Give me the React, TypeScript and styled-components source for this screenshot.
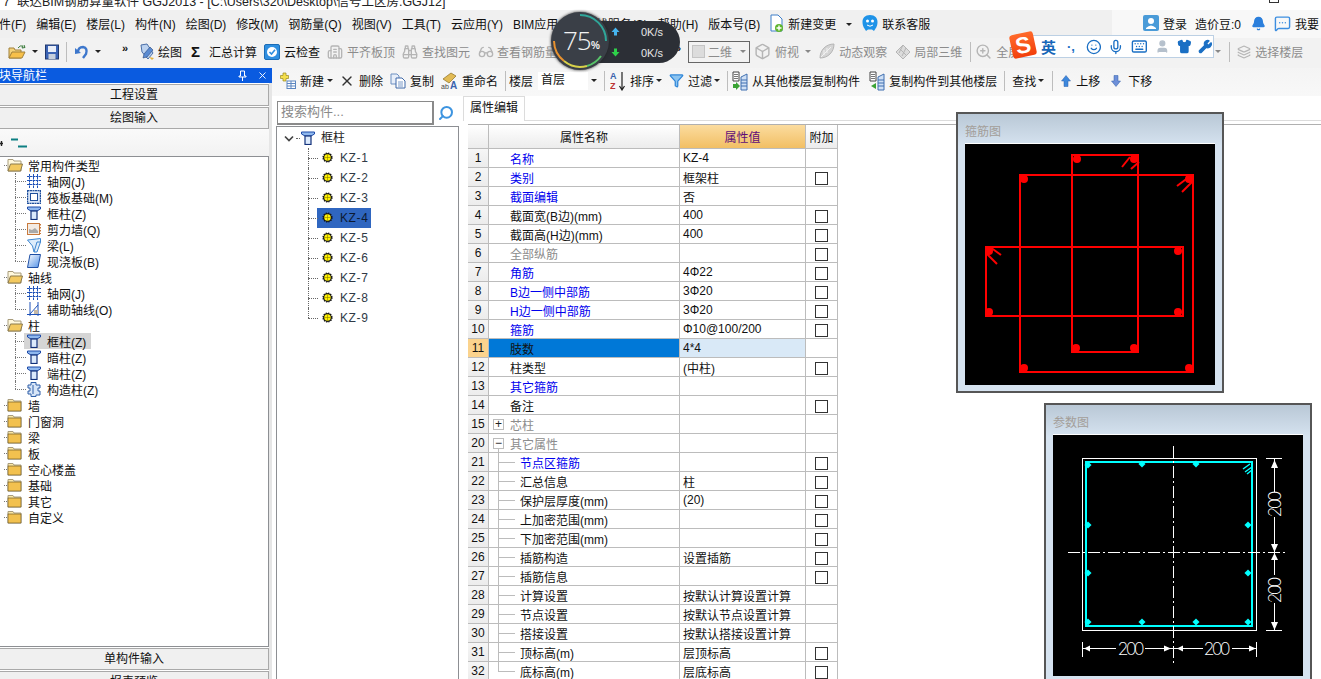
import React from "react";
import styled, { createGlobalStyle } from "styled-components";
import {
  Binoculars, Box, Glasses, Keyboard, Layers, MessageSquareMore, Mic, Smile,
  Shirt, Wrench, X, ZoomIn, Search, Funnel, Boxes, Building2, Bell, User,
} from "lucide-react";

const GlobalStyle = createGlobalStyle`
  html, body {
    margin: 0;
    padding: 0;
    background: #fff;
    overflow: hidden;
  }
  body {
    font-family: "Liberation Sans", "Noto Sans CJK SC", sans-serif;
    font-size: 12px;
    color: #111;
  }
`;

const Page = styled.div`
  position: relative;
  width: 1321px;
  height: 679px;
  overflow: hidden;
  background: #fff;
`;

const TitleBar = styled.div`
  height: 10px;
  display: flex;
  overflow: hidden;
  background: #fff;
  font-size: 12.5px;
  line-height: 12px;
  color: #222;
`;

const TitleText = styled.span`
  margin: -4px 0 0 3px;
  white-space: pre;
`;

const WinButton = styled.span`
  width: 8px;
  height: 2px;
  margin: 0 42px 0 auto;
  border: 1px solid #333;
  border-top: 0;
`;

const MenuBar = styled.div`
  height: 28px;
  padding-left: 0;
  display: flex;
  align-items: center;
  gap: 10px;
  background: #f0f0f0;
  white-space: nowrap;
`;

const MenuItem = styled.span<{ $ml?: number }>`
  margin: -2px 0 0 ${p => p.$ml || 0}px;
  display: flex;
  align-items: center;
  gap: 4px;
`;

const LoginZone = styled.div`
  margin-left: auto;
  width: 209px;
  height: 100%;
  box-sizing: border-box;
  padding: 0 0 2px 31px;
  display: flex;
  align-items: center;
  gap: 4px;
  background: #f8f8f8;
`;

const LoginText = styled.span<{ $ml?: number }>`
  margin-left: ${p => p.$ml || 0}px;
  display: flex;
`;

const Toolbar = styled.div<{ $tall?: number; $pad?: number; $bg?: string }>`
  height: ${p => p.$tall}px;
  box-sizing: border-box;
  padding: 0 0 3px ${p => p.$pad || 0}px;
  display: flex;
  align-items: center;
  background: ${p => p.$bg};
  white-space: nowrap;
`;

const Tool = styled.span<{ $ml?: number; $off?: boolean; $gap?: number }>`
  margin-left: ${p => p.$ml || 0}px;
  display: flex;
  flex: none;
  align-items: center;
  gap: ${p => (p.$gap === undefined ? 4 : p.$gap)}px;
  color: ${p => (p.$off ? "#8c8c8c" : "#111")};
`;

const Caret = styled.span<{ $ml?: number; $off?: boolean }>`
  margin-left: ${p => p.$ml || 0}px;
  flex: none;
  width: 0;
  height: 0;
  border: 3px solid transparent;
  border-top: 3px solid ${p => (p.$off ? "#888" : "#222")};
  border-bottom: 0;
`;

const Sep = styled.span<{ $ml?: number }>`
  margin-left: ${p => p.$ml || 0}px;
  flex: none;
  width: 1px;
  height: 20px;
  background: #bdbdbd;
`;

const Chevrons = styled.span<{ $ml?: number }>`
  margin: -8px 0 0 ${p => p.$ml || 0}px;
  flex: none;
  width: 10px;
  font-size: 11px;
  font-weight: 700;
  line-height: 12px;
`;

const SigmaMark = styled.b`
  width: 11px;
  font-size: 15px;
  line-height: 16px;
`;

const ViewSelect = styled.span`
  margin-left: 3px;
  flex: none;
  width: 62px;
  height: 22px;
  box-sizing: border-box;
  padding-left: 3px;
  display: flex;
  align-items: center;
  gap: 3px;
  border: 1px solid #666;
  color: #8c8c8c;
`;

const ViewSwatch = styled.span`
  width: 13px;
  height: 13px;
  background: #dcdcdc;
  border: 1px solid #c4c4c4;
  box-sizing: border-box;
`;

const FloorSelect = styled.span`
  margin-left: 5px;
  flex: none;
  width: 50px;
  height: 18px;
  line-height: 16px;
  padding-left: 3px;
  box-sizing: border-box;
  background: #fff;
`;

const Body = styled.div`
  display: flex;
  height: 611px;
`;

const LeftPane = styled.div`
  flex: none;
  width: 272px;
  height: 100%;
  display: flex;
  flex-direction: column;
  background: linear-gradient(to right, #fff 269px, #e6e6e6 269px);
`;

const PaneHeader = styled.div`
  flex: none;
  height: 15px;
  display: flex;
  align-items: center;
  background: #0a5be0;
  color: #fff;
  line-height: 16px;
`;

const PaneTitle = styled.span`
  margin-left: -1px;
`;

const PaneControl = styled.span<{ $ml?: number }>`
  margin-left: ${p => p.$ml}px;
  display: flex;
  color: #fff;
`;

const NavButton = styled.div`
  flex: none;
  width: 269px;
  height: 22px;
  margin-top: 1px;
  box-sizing: border-box;
  border: 1px solid #a9a9a9;
  border-left: 0;
  background: #f0f0f0;
  text-align: center;
  line-height: 21px;
  font-size: 12px;
`;

const MiniBar = styled.div`
  flex: none;
  width: 269px;
  height: 27px;
  background: linear-gradient(#fafafa, #f2f2f2);
  display: flex;
  align-items: center;
`;

const NavTree = styled.div`
  flex: none;
  width: 269px;
  height: 491px;
  box-sizing: border-box;
  border: 1px solid #8d8f93;
  border-left: 0;
  background: #fff;
`;

const NavRow = styled.div<{ $line?: "mid" | "end" }>`
  position: relative;
  height: 16px;
  display: flex;
  align-items: center;
  padding-left: ${p => (p.$line ? 24 : 7)}px;
  gap: 5px;
  white-space: nowrap;
  &::before {
    content: "";
    position: absolute;
    left: ${p => (p.$line ? 15 : 4)}px;
    top: ${p => (p.$line ? 0 : 8)}px;
    height: ${p => (p.$line === "end" ? 8 : p.$line ? 16 : 0)}px;
    border-left: 1px dotted #777;
  }
  &::after {
    content: "";
    position: absolute;
    left: ${p => (p.$line ? 15 : 4)}px;
    top: 8px;
    width: ${p => (p.$line ? 11 : 3)}px;
    border-top: 1px dotted #777;
  }
`;

const NavEntry = styled.span<{ $on?: boolean }>`
  position: relative;
  z-index: 1;
  height: 16px;
  display: flex;
  align-items: center;
  gap: 6px;
  padding: 0 5px 0 3px;
  background: ${p => (p.$on ? "#d5d5d5" : "transparent")};
`;

const MiddlePane = styled.div`
  flex: none;
  width: 183px;
  margin-left: 4px;
  height: 100%;
  display: flex;
  flex-direction: column;
`;

const ContentRow = styled.div`
  display: flex;
  height: 583px;
`;

const MainColumn = styled.div`
  flex: 1;
  min-width: 0;
`;

const SearchRow = styled.div`
  flex: none;
  height: 30px;
  display: flex;
  align-items: center;
  padding-top: 4px;
  box-sizing: border-box;
`;

const SearchInput = styled.div`
  margin-left: 1px;
  width: 157px;
  height: 24px;
  box-sizing: border-box;
  padding-left: 3px;
  border: 1px solid #8a8a8a;
  border-right-width: 2px;
  border-bottom-width: 2px;
  color: #8a8a8a;
  font-size: 13px;
  line-height: 20px;
`;

const SearchButton = styled.span`
  margin-left: 4px;
  display: flex;
  color: #3d94e0;
  transform: scaleX(-1);
`;

const MemberTree = styled.div`
  flex: 1;
  padding-top: 1px;
  border: 1px solid #8d8f93;
  border-bottom: 0;
`;

const MemberRoot = styled.div`
  position: relative;
  height: 20px;
  display: flex;
  align-items: center;
  padding-left: 7px;
  &::after {
    content: "";
    position: absolute;
    left: 19px;
    top: 10px;
    width: 4px;
    border-top: 1px dotted #666;
  }
`;

const RootIcon = styled.span`
  margin-left: 7px;
  display: flex;
`;

const MemberRootLabel = styled.span`
  margin: -3px 0 0 6px;
  color: #222;
`;

const MemberRow = styled.div<{ $last?: boolean }>`
  position: relative;
  height: 20px;
  display: flex;
  align-items: center;
  &::before {
    content: "";
    position: absolute;
    left: 31px;
    top: 0;
    height: ${p => (p.$last ? 10 : 20)}px;
    border-left: 1px dotted #666;
  }
  &::after {
    content: "";
    position: absolute;
    left: 31px;
    top: 10px;
    width: 10px;
    border-top: 1px dotted #666;
  }
`;

const MemberEntry = styled.span<{ $on?: boolean }>`
  margin-left: 40px;
  width: 54px;
  height: 20px;
  padding: 0 0 1px 5px;
  display: flex;
  align-items: center;
  gap: 7px;
  box-sizing: border-box;
  background: ${p => (p.$on ? "#2f66c0" : "transparent")};
  color: ${p => (p.$on ? "#0c1a33" : "#303a46")};
  letter-spacing: 0.6px;
`;

const RightPane = styled.div`
  flex: 1;
  margin-left: 4px;
  min-width: 0;
`;

const TabStrip = styled.div`
  height: 24px;
  border-bottom: 1px solid #dcdcdc;
  display: flex;
`;

const Tab = styled.div`
  width: 62px;
  height: 25px;
  box-sizing: border-box;
  border: 1px solid #dcdcdc;
  border-bottom: 0;
  background: #fff;
  text-align: center;
  line-height: 23px;
`;

const TableTop = styled.div`
  height: 3px;
  border-bottom: 1px solid #b0b0b0;
  margin-left: 5px;
`;

const PropTable = styled.table`
  margin-left: 5px;
  width: 370px;
  table-layout: fixed;
  border-collapse: separate;
  border-spacing: 0;
  font-size: 12px;
  & th, & td {
    padding: 0;
    box-sizing: border-box;
    border-right: 1px solid #bcbcbc;
    border-bottom: 1px solid #bcbcbc;
    font-weight: 400;
    white-space: nowrap;
    overflow: hidden;
  }
`;

const HeadCell = styled.th<{ $hot?: boolean }>`
  height: 24px;
  background: ${p =>
    p.$hot ? "linear-gradient(#fbdc9f, #f2bf64)" : "linear-gradient(#ffffff, #ececec)"};
  color: ${p => (p.$hot ? "#5f0d78" : "#111")};
`;

const NumCell = styled.td<{ $on?: boolean }>`
  height: 19px;
  text-align: center;
  background: ${p => (p.$on ? "#fbd38d" : "linear-gradient(#f6f6f6, #ececec)")};
`;

const NameCell = styled.td<{
  $tone: string;
  $on?: boolean;
  $tree?: "group" | "open" | "mid" | "end";
}>`
  position: relative;
  height: 19px;
  padding-left: ${p =>
    p.$tree === "group" || p.$tree === "open"
      ? 4
      : p.$tree
      ? 31
      : 21}px !important;
  background: ${p => (p.$on ? "#0078d7" : "#fff")};
  color: ${p => (p.$tone === "blue" ? "#0000ee" : p.$tone === "gray" ? "#8c8c8c" : "#111")};
  &::before {
    content: "";
    position: absolute;
    left: 9px;
    top: ${p => (p.$tree === "open" ? 14 : 0)}px;
    height: ${p => (p.$tree === "open" ? 5 : p.$tree === "end" ? 9 : p.$tree === "mid" ? 19 : 0)}px;
    border-left: 1px solid #bcbcbc;
  }
  &::after {
    content: "";
    position: absolute;
    left: 9px;
    top: 9px;
    width: ${p => (p.$tree === "mid" || p.$tree === "end" ? 17 : 0)}px;
    border-top: 1px solid #bcbcbc;
    display: ${p => (p.$tree === "mid" || p.$tree === "end" ? "block" : "none")};
  }
`;

const GroupInner = styled.span`
  display: flex;
  align-items: center;
  gap: 6px;
`;

const Expander = styled.span`
  width: 11px;
  height: 11px;
  box-sizing: border-box;
  border: 1px solid #bcbcbc;
  color: #222;
  font-size: 12px;
  line-height: 8px;
  text-align: center;
`;

const ValueCell = styled.td<{ $on?: boolean }>`
  height: 19px;
  padding-left: 3px !important;
  background: ${p => (p.$on ? "#d9e9f7" : "#fff")};
`;

const ExtraCell = styled.td`
  height: 19px;
  background: #fff;
  text-align: center;
`;

const Check = styled.span`
  display: inline-block;
  width: 13px;
  height: 13px;
  margin-top: 2px;
  box-sizing: border-box;
  border: 1px solid #333;
  vertical-align: top;
`;

const FloatWindow = styled.div<{ $left: number; $top: number; $height: number }>`
  position: absolute;
  left: ${p => p.$left}px;
  top: ${p => p.$top}px;
  width: 268px;
  height: ${p => p.$height}px;
  box-sizing: border-box;
  padding: 0 7px;
  border: 2px solid #565656;
  background: linear-gradient(#b9c8d6, #d6e3f0 32px);
`;

const FloatTitle = styled.div`
  height: 30px;
  line-height: 36px;
  color: #a39e99;
`;

const DrawingCanvas = styled.svg`
  display: block;
  width: 250px;
  height: 241px;
  background: #000;
  border-top: 1px solid #fff;
  margin-top: -1px;
  font-family: "Inter", "Liberation Sans", sans-serif;
`;

const SpeedWidget = styled.div`
  position: absolute;
  left: 551px;
  top: 12px;
  width: 130px;
  height: 58px;
  display: flex;
  align-items: center;
`;

const SpeedPill = styled.div`
  position: absolute;
  left: 48px;
  top: 9px;
  width: 81px;
  height: 42px;
  border-radius: 0 21px 21px 0;
  background: #2c2f36;
  color: #fff;
  font-size: 10px;
`;

const SpeedLine = styled.div`
  height: 21px;
  display: flex;
  align-items: center;
  padding-left: 12px;
`;

const SpeedValue = styled.span`
  margin-left: 21px;
  color: #e6e6e6;
  font-size: 11px;
`;

const SpeedDial = styled.div`
  position: relative;
  width: 58px;
  height: 58px;
  border-radius: 50%;
  background: #3a3f47;
  box-shadow: 0 0 3px #222;
  color: #f2f2f2;
`;

const DialRing = styled.svg`
  position: absolute;
  inset: 0;
`;

const DialText = styled.span`
  position: absolute;
  left: 12px;
  top: 10px;
  font-size: 26px;
  line-height: 36px;
  font-weight: 300;
  font-family: "Open Sans", "Liberation Sans", sans-serif;
  letter-spacing: -1px;
`;

const DialPercent = styled.span`
  position: absolute;
  left: 40px;
  top: 28px;
  font-size: 10px;
  line-height: 12px;
  font-weight: 700;
`;

const ImeBar = styled.div`
  position: absolute;
  left: 1018px;
  top: 35px;
  width: 196px;
  height: 23px;
  box-sizing: border-box;
  display: flex;
  align-items: center;
  padding-left: 22px;
  gap: 7px;
  background: #fff;
  border: 1px solid #bcd0e4;
  color: #1a6fc4;
`;

const ImeLogo = styled.span`
  position: absolute;
  left: 1011px;
  top: 33px;
  width: 24px;
  height: 24px;
  transform: rotate(-12deg);
  border-radius: 3px;
  background: linear-gradient(#ff6a2a, #f23f0c);
  color: #fff;
  font-size: 23px;
  line-height: 24px;
  font-weight: 700;
  text-align: center;
`;

const ImeLang = styled.b`
  font-size: 15px;
  color: #1766b8;
`;

const ImeMoon = styled.span`
  width: 16px;
  font-size: 13px;
  font-weight: 700;
  line-height: 12px;
  text-align: center;
`;

/* ---------- drawn icons ---------- */

const FolderIcon = ({ open }: { open?: boolean }) => (
  <svg width="16" height="14" viewBox="0 0 16 14">
    <path d="M1 3 V1.5 H6 L7 3 H14 V13 H1 Z" fill={open ? "#fff8dc" : "#fbe7a4"} stroke="#a89c7c" />
    {open ? (
      <path d="M3.5 6 H15.5 L13.5 13 H1 Z" fill="#f3c95f" stroke="#8a7a4f" />
    ) : (
      <rect x="1" y="4" width="13" height="9" fill="#f2c14f" stroke="#5a4a1f" strokeWidth="0.6" />
    )}
  </svg>
);

const OpenFileIcon = () => (
  <svg width="18" height="16" viewBox="0 0 18 16" style={{ flex: "none" }}>
    <path d="M1 4 H6 L7 6 H13 V14 H1 Z" fill="#f4d27a" stroke="#a0803a" />
    <path d="M4 8 H17 L14 14 H1 Z" fill="#f7c04a" stroke="#a0803a" />
    <path d="M10 4 Q12 1 15 2 L14 4 L17 3.500 L16 1" fill="none" stroke="#3a7a3a" strokeWidth="1" />
  </svg>
);

const SaveIcon = () => (
  <svg width="14" height="16" viewBox="0 0 14 16" style={{ flex: "none" }}>
    <rect x="0.5" y="1" width="13" height="14" fill="#3b63b4" stroke="#20386e" />
    <rect x="3" y="2" width="8" height="6" fill="#e9eef8" />
    <rect x="3.500" y="10" width="7" height="5" fill="#c6cfdd" />
  </svg>
);

const UndoIcon = () => (
  <svg width="14" height="16" viewBox="0 0 14 16" style={{ flex: "none" }}>
    <path d="M3 8 Q3 3 8 3 Q13 4 11 10 L8 14" fill="none" stroke="#3d77cc" strokeWidth="2.4" />
    <path d="M0 4 L6 9 L0 10 Z" fill="#3d77cc" />
  </svg>
);

const PencilIcon = () => (
  <svg width="16" height="18" viewBox="0 0 16 18">
    <path d="M2 2 L8 1 L14 10 L9 16 L3 9 Z" fill="#bcd2ef" stroke="#4b6fa8" />
    <path d="M5 11 L11 4 L14 7 L8 14 L4 15 Z" fill="#5b8bd1" stroke="#27467d" strokeWidth="0.6" />
    <path d="M10 14 L15 15 L13 17 Z" fill="#e3b23c" />
  </svg>
);

const CloudCheckIcon = () => (
  <svg width="16" height="18" viewBox="0 0 16 18">
    <rect x="0.5" y="1.500" width="15" height="15" rx="1.500" fill="#2f8fe0" stroke="#1b6cb5" />
    <circle cx="8" cy="9" r="5" fill="#fff" />
    <path d="M5.500 9 L7.500 11 L11 6.800" fill="none" stroke="#2f8fe0" strokeWidth="1.600" />
  </svg>
);

const LeafIcon = () => (
  <svg width="17" height="17" viewBox="0 0 17 17">
    <path d="M2 15 C2 7 8 1 16 1 C16 9 10 15 2 15 Z" fill="#d4d4d4" stroke="#b5b5b5" />
    <path d="M3 14 L13 4 M6 7 V12 M9 5 V10" stroke="#f2f2f2" />
  </svg>
);

const DiamondBoxIcon = () => (
  <svg width="16" height="16" viewBox="0 0 16 16">
    <path d="M8 1 L15 8 L8 15 L1 8 Z" fill="#dcdcdc" stroke="#b5b5b5" />
    <path d="M4.500 4.500 L11.500 11.500 M8 1 L4 9 M11 4 L7 12" stroke="#b5b5b5" fill="none" />
  </svg>
);

const DocPlusIcon = () => (
  <svg width="14" height="19" viewBox="0 0 14 19">
    <path d="M1 1 H8 L12 5 V17 H1 Z" fill="#fff" stroke="#3f7fc9" />
    <circle cx="9" cy="14" r="4" fill="#5fb52e" />
    <path d="M9 11.500 V16.500 M6.500 14 H11.500" stroke="#fff" strokeWidth="1.400" />
  </svg>
);

const MascotIcon = () => (
  <svg width="16" height="18" viewBox="0 0 16 18">
    <path d="M8 1 C13 1 15.500 4 15.500 8 C15.500 13 13 15 12 17 L10 15.500 H6 L4 17 C3 15 0.500 13 0.500 8 C0.500 4 3 1 8 1 Z" fill="#1f93e8" />
    <circle cx="5.500" cy="7" r="1.500" fill="#fff" />
    <circle cx="10.500" cy="7" r="1.500" fill="#fff" />
    <path d="M5 11 Q8 13.500 11 11" stroke="#fff" fill="none" />
  </svg>
);

const NewPartIcon = () => (
  <svg width="16" height="18" viewBox="0 0 16 18">
    <path d="M3 1 H6 V3.500 H8.500 V6.500 H6 V9 H3 V6.500 H0.500 V3.500 H3 Z" fill="#f5df4d" stroke="#9a8a20" strokeWidth="0.7" />
    <rect x="7" y="9" width="8.500" height="7.500" fill="#fff" stroke="#5c86c0" />
    <path d="M7 11.500 H15.500 M7 14 H15.500 M11 9 V16.500" stroke="#5c86c0" />
  </svg>
);

const CopyIcon = () => (
  <svg width="16" height="16" viewBox="0 0 16 16">
    <path d="M1 1 H7 L9 3 V11 H1 Z" fill="#e7eef9" stroke="#6d8fc0" />
    <path d="M6 5 H12 L15 8 V15 H6 Z" fill="#fff" stroke="#3e68a8" />
    <path d="M8 9 H13 M8 11 H13 M8 13 H13" stroke="#7b9ac8" />
  </svg>
);

const RenameIcon = () => (
  <svg width="17" height="18" viewBox="0 0 17 18">
    <path d="M2 7 L10 1 L15 4 L8 11 Z" fill="#e2bb55" stroke="#8b6f22" strokeWidth="0.7" />
    <text x="0" y="17" fontSize="7" fill="#444">ab</text>
    <text x="9" y="17" fontSize="10" fontWeight="700" fill="#3a63ad">A</text>
  </svg>
);

const SortIcon = () => (
  <svg width="16" height="20" viewBox="0 0 16 20">
    <text x="0" y="8" fontSize="9" fontWeight="700" fill="#3a63ad">A</text>
    <text x="0" y="18" fontSize="9" fontWeight="700" fill="#b33">Z</text>
    <path d="M12 1 V18 M9.500 15 L12 19 L14.500 15" fill="none" stroke="#222" strokeWidth="1.200" />
  </svg>
);

const FloorCopyIcon = ({ back }: { back?: boolean }) => (
  <svg width="16" height="20" viewBox="0 0 16 20">
    <path d="M1 1 H7 V10 H1 Z" fill="#fff" stroke="#444" />
    <path d="M2 3.500 H6 M2 5.500 H6 M2 7.500 H6" stroke="#777" />
    <path d="M9 6 L15 3 V19 H9 Z" fill="#cfe0f5" stroke="#3f6fb0" />
    <path d="M9 9 H15 M9 12 H15 M9 15 H15" stroke="#3f6fb0" />
    <path d={back ? "M7 12 L2 15 L7 18 Z" : "M1 13 H4 V11 L8 15 L4 19 V17 H1 Z"} fill="#3aa334" />
  </svg>
);

const MoveIcon = ({ down }: { down?: boolean }) => (
  <svg width="10" height="12" viewBox="0 0 10 12">
    <path
      d={down ? "M3 0.500 H7 V6 H9.500 L5 11.500 L0.500 6 H3 Z" : "M3 11.500 H7 V6 H9.500 L5 0.500 L0.500 6 H3 Z"}
      fill={down ? "#6d8fd8" : "#3d88dd"}
      stroke="#2e5fa8"
      strokeWidth="0.5"
    />
  </svg>
);

const ColumnIcon = () => (
  <svg width="14" height="14" viewBox="0 0 14 14" style={{ flex: "none" }}>
    <path d="M0.500 1 H13.500 V3 L10 5 H4 L0.500 3 Z" fill="#8fb8ee" stroke="#1d4aa8" />
    <rect x="4" y="5" width="6" height="8.500" fill="#dceafc" stroke="#12307a" strokeWidth="1.200" />
  </svg>
);

const GridIcon = () => (
  <svg width="14" height="14" viewBox="0 0 14 14" style={{ flex: "none" }}>
    <path d="M2.500 0 V14 M6.500 0 V14 M10.500 0 V14 M0 2.500 H14 M0 6.500 H14 M0 10.500 H14" stroke="#1f52b8" strokeDasharray="2.500 0.500" />
  </svg>
);

const RaftIcon = () => (
  <svg width="14" height="14" viewBox="0 0 14 14" style={{ flex: "none" }}>
    <rect x="0.500" y="0.500" width="13" height="13" fill="#dbe7f8" stroke="#1f4f9c" strokeWidth="1.400" strokeDasharray="2 0.5" />
    <rect x="3.500" y="3.500" width="7" height="7" fill="#fff" stroke="#1f4f9c" />
  </svg>
);

const WallIcon = () => (
  <svg width="14" height="14" viewBox="0 0 14 14" style={{ flex: "none" }}>
    <rect x="0.500" y="1.500" width="12" height="11" fill="#f3ebe3" stroke="#c97a3d" />
    <path d="M2 11 H11 V9 L8 6 L5 8 L2 7 Z" fill="#a9a9a9" />
    <path d="M13.500 2 V12" stroke="#c97a3d" strokeDasharray="1.500 1.500" />
  </svg>
);

const BeamIcon = () => (
  <svg width="14" height="15" viewBox="0 0 14 15" style={{ flex: "none" }}>
    <path d="M0.500 2 L13.500 0.500 V4 L10 14 H7 L5.500 8 Z" fill="#dcecfb" stroke="#3f86d0" />
    <path d="M7 14 L10 4 H13.500" fill="none" stroke="#3f86d0" />
  </svg>
);

const SlabIcon = () => (
  <svg width="14" height="14" viewBox="0 0 14 14" style={{ flex: "none" }}>
    <path d="M3 0.500 H13.500 L11 13.500 H0.500 Z" fill="url(#slabFill)" stroke="#1f4fa5" />
    <defs>
      <linearGradient id="slabFill" x1="0" y1="0" x2="1" y2="1">
        <stop offset="0" stopColor="#ffffff" />
        <stop offset="1" stopColor="#4f8fe6" />
      </linearGradient>
    </defs>
  </svg>
);

const AuxAxisIcon = () => (
  <svg width="14" height="14" viewBox="0 0 14 14" style={{ flex: "none" }}>
    <path d="M3 0 V14 M11 0 V14 M0 12.500 H14 M3 12 L11 3" stroke="#1f52b8" />
    <rect x="7" y="8" width="4" height="4" fill="#c7b9a5" />
  </svg>
);

const PuzzleIcon = () => (
  <svg width="14" height="15" viewBox="0 0 14 15" style={{ flex: "none" }}>
    <path d="M4 0.500 H9 V3 H13 V6 H11 V9 H13 V13 H9 V14.500 H4 V12 H1 V9 H3 V6 H1 V3 H4 Z" fill="#d7e5f7" stroke="#2f5fa8" />
    <path d="M6 3 V12" stroke="#2f5fa8" />
  </svg>
);

const GearDot = () => (
  <svg width="11" height="11" viewBox="0 0 11 11" style={{ flex: "none", position: "relative", zIndex: 1 }}>
    <circle cx="5.500" cy="5.500" r="4.400" fill="#222" stroke="#111" strokeDasharray="1.300 1" strokeWidth="1.400" />
    <circle cx="5.500" cy="5.500" r="3.200" fill="#fff200" />
    <path d="M5.500 2.500 V8.500 M2.500 5.500 H8.500" stroke="#7a6a00" strokeWidth="0.500" />
  </svg>
);

const ChevronDown = () => (
  <svg width="10" height="7" viewBox="0 0 10 7" style={{ flex: "none" }}>
    <path d="M1 1.500 L5 5.500 L9 1.500" fill="none" stroke="#444" strokeWidth="1.700" />
  </svg>
);

const PinIcon = () => (
  <svg width="9" height="11" viewBox="0 0 9 11">
    <path d="M2.500 1 H6.500 V6 H8 V7 H1 V6 H2.500 Z M4.500 7 V11" fill="none" stroke="#fff" />
  </svg>
);

const LoginBadge = () => (
  <svg width="16" height="18" viewBox="0 0 16 18" style={{ flex: "none" }}>
    <rect x="0" y="1" width="16" height="16" rx="2" fill="#4a9bd8" />
    <circle cx="8" cy="7" r="3" fill="#fff" />
    <path d="M3 14 Q8 9 13 14 V15 H3 Z" fill="#fff" />
  </svg>
);

const TreeCollapseMarks = () => (
  <svg width="30" height="14" viewBox="0 0 30 14">
    <path d="M0 7.500 H3 M1.500 5 V10" stroke="#222" strokeWidth="1.400" />
    <path d="M11 3.500 H18" stroke="#0d7f82" strokeWidth="2" />
    <path d="M18 10.500 H27" stroke="#0d7f82" strokeWidth="2" />
  </svg>
);

const SpeedArrow = ({ down }: { down?: boolean }) => (
  <svg width="9" height="9" viewBox="0 0 9 9">
    <path
      d={down ? "M3 0.500 H6 V4 H8.500 L4.500 8.500 L0.500 4 H3 Z" : "M3 8.500 H6 V5 H8.500 L4.500 0.500 L0.500 5 H3 Z"}
      fill={down ? "#2ed14a" : "#46b4ee"}
    />
  </svg>
);

/* ---------- rebar drawings ---------- */

const StirrupDrawing = () => {
  const rects = [
    [55, 31, 173, 197],
    [107, 11, 66, 197],
    [21, 103, 197, 69],
  ];
  const dots = [
    [112, 15], [169, 15], [111, 204], [169, 204],
    [59, 35], [224, 35], [59, 224], [224, 224],
    [24, 107], [213, 107], [24, 168], [213, 168],
  ];
  const hooks = [
    [165, 13, 157, 23], [174, 18, 166, 25],
    [224, 33, 212, 42], [228, 37, 217, 48],
    [25, 103, 36, 111], [21, 109, 32, 120],
  ];
  return (
    <DrawingCanvas viewBox="0 0 250 241">
      {rects.map(([x, y, w, h], i) => (
        <rect key={i} x={x} y={y} width={w} height={h} fill="none" stroke="#ff0000" strokeWidth="2" />
      ))}
      {dots.map(([x, y], i) => (
        <circle key={i} cx={x} cy={y} r="4" fill="#ff0000" />
      ))}
      {hooks.map(([x1, y1, x2, y2], i) => (
        <line key={i} x1={x1} y1={y1} x2={x2} y2={y2} stroke="#ff0000" strokeWidth="2" />
      ))}
    </DrawingCanvas>
  );
};

const ParameterDrawing = () => {
  const bars = [
    [89, 29], [143, 29], [35, 90], [195, 90], [35, 138], [195, 138],
    [89, 187], [143, 187], [35, 187], [195, 187], [35, 30],
  ];
  const arrows = [
    "M218 33 L221.500 25 L225 33 Z",
    "M218 109 L221.500 117 L225 109 Z",
    "M218 125 L221.500 118 L225 125 Z",
    "M218 187 L221.500 195 L225 187 Z",
    "M31 213.500 L37 210.500 V216.500 Z",
    "M118 213.500 L111 210.500 V216.500 Z",
    "M124 213.500 L130 210.500 V216.500 Z",
    "M203 213.500 L196 210.500 V216.500 Z",
  ];
  const labels = ["translate(78 220)", "translate(164 220)", "translate(228 69) rotate(-90)", "translate(228 155) rotate(-90)"];
  return (
    <DrawingCanvas viewBox="0 0 250 241">
      <rect x="29.500" y="23.500" width="174" height="172" fill="none" stroke="#fff" />
      <rect x="33" y="27" width="166" height="164" fill="none" stroke="#00ffff" strokeWidth="2" />
      {bars.map(([x, y], i) => (
        <rect key={i} x={x - 2.5} y={y - 2.5} width="5" height="5" transform={`rotate(45 ${x} ${y})`} fill="#00ffff" />
      ))}
      <path d="M190 34 L197 29 M192 37 L199 32 M194 39 L199 35" stroke="#00ffff" strokeWidth="1.500" />
      <line x1="120.500" y1="11" x2="120.500" y2="228" stroke="#fff" strokeDasharray="12 3 2 3" />
      <line x1="15" y1="117.500" x2="234" y2="117.500" stroke="#fff" strokeDasharray="12 3 2 3" />
      <path d="M213 23.500 H229 M213 195.500 H229 M221.500 23 V57 M221.500 82 V140 M221.500 168 V195" stroke="#fff" fill="none" />
      <path d="M29.500 207 V222 M203.500 207 V222 M30 213.500 H63 M92 213.500 H150 M179 213.500 H203" stroke="#fff" fill="none" />
      {arrows.map((d, i) => (
        <path key={i} d={d} fill="#fff" />
      ))}
      {labels.map((t, i) => (
        <text key={i} transform={t} textAnchor="middle" fontSize="18" fontWeight="200" fill="#fff" textLength="27">200</text>
      ))}
    </DrawingCanvas>
  );
};

/* ---------- data ---------- */

const menuItems = [
  "件(F)", "编辑(E)", "楼层(L)", "构件(N)", "绘图(D)", "修改(M)", "钢筋量(Q)", "视图(V)",
  "工具(T)", "云应用(Y)", "BIM应用(I)", "在线服务(S)", "帮助(H)", "版本号(B)",
];

type NavNode = { label: string; icon?: React.ReactNode; open?: boolean; on?: boolean; kids?: NavNode[] };

const navTree: NavNode[] = [
  {
    label: "常用构件类型", open: true, kids: [
      { label: "轴网(J)", icon: <GridIcon /> },
      { label: "筏板基础(M)", icon: <RaftIcon /> },
      { label: "框柱(Z)", icon: <ColumnIcon /> },
      { label: "剪力墙(Q)", icon: <WallIcon /> },
      { label: "梁(L)", icon: <BeamIcon /> },
      { label: "现浇板(B)", icon: <SlabIcon /> },
    ],
  },
  {
    label: "轴线", open: true, kids: [
      { label: "轴网(J)", icon: <GridIcon /> },
      { label: "辅助轴线(O)", icon: <AuxAxisIcon /> },
    ],
  },
  {
    label: "柱", open: true, kids: [
      { label: "框柱(Z)", icon: <ColumnIcon />, on: true },
      { label: "暗柱(Z)", icon: <ColumnIcon /> },
      { label: "端柱(Z)", icon: <ColumnIcon /> },
      { label: "构造柱(Z)", icon: <PuzzleIcon /> },
    ],
  },
  { label: "墙" }, { label: "门窗洞" }, { label: "梁" }, { label: "板" },
  { label: "空心楼盖" }, { label: "基础" }, { label: "其它" }, { label: "自定义" },
];

type PropRow = {
  n: number;
  name: string;
  value?: string;
  check?: boolean;
  tone?: string;
  tree?: "group" | "open" | "mid" | "end";
  sign?: string;
  on?: boolean;
};

const propRows: PropRow[] = [
  { n: 1, name: "名称", value: "KZ-4", tone: "blue" },
  { n: 2, name: "类别", value: "框架柱", tone: "blue", check: true },
  { n: 3, name: "截面编辑", value: "否", tone: "blue" },
  { n: 4, name: "截面宽(B边)(mm)", value: "400", check: true },
  { n: 5, name: "截面高(H边)(mm)", value: "400", check: true },
  { n: 6, name: "全部纵筋", tone: "gray", check: true },
  { n: 7, name: "角筋", value: "4Φ22", tone: "blue", check: true },
  { n: 8, name: "B边一侧中部筋", value: "3Φ20", tone: "blue", check: true },
  { n: 9, name: "H边一侧中部筋", value: "3Φ20", tone: "blue", check: true },
  { n: 10, name: "箍筋", value: " Φ10@100/200", tone: "blue", check: true },
  { n: 11, name: "肢数", value: "4*4", on: true },
  { n: 12, name: "柱类型", value: "(中柱)", check: true },
  { n: 13, name: "其它箍筋", tone: "blue" },
  { n: 14, name: "备注", check: true },
  { n: 15, name: "芯柱", tone: "gray", tree: "group", sign: "+" },
  { n: 20, name: "其它属性", tone: "gray", tree: "open", sign: "−" },
  { n: 21, name: "节点区箍筋", tone: "blue", tree: "mid", check: true },
  { n: 22, name: "汇总信息", value: "柱", tree: "mid", check: true },
  { n: 23, name: "保护层厚度(mm)", value: "(20)", tree: "mid", check: true },
  { n: 24, name: "上加密范围(mm)", tree: "mid", check: true },
  { n: 25, name: "下加密范围(mm)", tree: "mid", check: true },
  { n: 26, name: "插筋构造", value: "设置插筋", tree: "mid", check: true },
  { n: 27, name: "插筋信息", tree: "mid", check: true },
  { n: 28, name: "计算设置", value: "按默认计算设置计算", tree: "mid" },
  { n: 29, name: "节点设置", value: "按默认节点设置计算", tree: "mid" },
  { n: 30, name: "搭接设置", value: "按默认搭接设置计算", tree: "mid" },
  { n: 31, name: "顶标高(m)", value: "层顶标高", tree: "mid", check: true },
  { n: 32, name: "底标高(m)", value: "层底标高", tree: "end", check: true },
];

const members = ["KZ-1", "KZ-2", "KZ-3", "KZ-4", "KZ-5", "KZ-6", "KZ-7", "KZ-8", "KZ-9"];

export default function App() {
  return (
    <Page>
      <GlobalStyle />
      <TitleBar>
        <TitleText>{"7  联达BIM钢筋算量软件 GGJ2013 - [C:\\Users\\320\\Desktop\\信号工区房.GGJ12]"}</TitleText>
        <WinButton />
      </TitleBar>

      <MenuBar>
        {menuItems.map((m, i) => (
          <MenuItem key={m} $ml={i === 0 ? -1 : i === 11 ? 4 : 0}>{m}</MenuItem>
        ))}
        <MenuItem><DocPlusIcon />新建变更</MenuItem>
        <Caret />
        <MenuItem><MascotIcon />联系客服</MenuItem>
        <LoginZone>
          <LoginBadge />
          <LoginText>登录</LoginText>
          <LoginText $ml={4}>造价豆:0</LoginText>
          <LoginText $ml={6}><Bell size={15} color="#2b7fdc" fill="#2b7fdc" /></LoginText>
          <LoginText $ml={4}><MessageSquareMore size={17} color="#3d8ee0" /></LoginText>
          <LoginText>我要</LoginText>
        </LoginZone>
      </MenuBar>

      <Toolbar $tall={30} $pad={8} $bg="#f2f2f2">
        <OpenFileIcon />
        <Caret $ml={6} />
        <Tool $ml={7}><SaveIcon /></Tool>
        <Sep $ml={7} />
        <Tool $ml={8}><UndoIcon /></Tool>
        <Caret $ml={6} />
        <Chevrons $ml={21}>»</Chevrons>
        <Tool $ml={7} $gap={3}><PencilIcon />绘图</Tool>
        <Tool $ml={9} $gap={7}><SigmaMark>Σ</SigmaMark>汇总计算</Tool>
        <Tool $ml={7}><CloudCheckIcon />云检查</Tool>
        <Tool $ml={7} $off><Building2 size={16} color="#b5b5b5" />平齐板顶</Tool>
        <Tool $ml={7} $off><Binoculars size={16} color="#b5b5b5" />查找图元</Tool>
        <Tool $ml={8} $off $gap={3}><Glasses size={16} color="#b5b5b5" />查看钢筋量</Tool>
        <Tool $ml={6} $off $gap={3}><Boxes size={16} color="#b5b5b5" />批量选择</Tool>
        <Chevrons $ml={45}>»</Chevrons>
        <ViewSelect>
          <ViewSwatch />
          二维
          <Caret $ml={5} $off />
        </ViewSelect>
        <Tool $ml={4} $off><Box size={17} color="#b5b5b5" />俯视</Tool>
        <Caret $ml={6} $off />
        <Tool $ml={7} $off><LeafIcon />动态观察</Tool>
        <Tool $ml={8} $off $gap={3}><DiamondBoxIcon />局部三维</Tool>
        <Sep $ml={8} />
        <Tool $ml={4} $off><ZoomIn size={17} color="#b5b5b5" />全屏</Tool>
        <Caret $ml={195} $off />
        <Sep $ml={8} />
        <Tool $ml={7} $off><Layers size={14} color="#b5b5b5" />选择楼层</Tool>
      </Toolbar>

      <Body>
        <LeftPane>
          <PaneHeader>
            <PaneTitle>块导航栏</PaneTitle>
            <PaneControl $ml={191}><PinIcon /></PaneControl>
            <PaneControl $ml={10}><X size={11} /></PaneControl>
          </PaneHeader>
          <NavButton>工程设置</NavButton>
          <NavButton>绘图输入</NavButton>
          <MiniBar><TreeCollapseMarks /></MiniBar>
          <NavTree>
            {navTree.map(node => (
              <React.Fragment key={node.label}>
                <NavRow>
                  <FolderIcon open={node.open} />
                  {node.label}
                </NavRow>
                {node.kids?.map((kid, i) => (
                  <NavRow key={kid.label + i} $line={i === node.kids!.length - 1 ? "end" : "mid"}>
                    <NavEntry $on={kid.on}>
                      {kid.icon}
                      {kid.label}
                    </NavEntry>
                  </NavRow>
                ))}
              </React.Fragment>
            ))}
          </NavTree>
          <NavButton>单构件输入</NavButton>
          <NavButton>报表预览</NavButton>
        </LeftPane>

        <MainColumn>
          <Toolbar $tall={28} $pad={8} $bg="linear-gradient(#f4f4f4, #f8f8f8)">
            <Tool><NewPartIcon />新建</Tool>
            <Caret $ml={3} />
            <Tool $ml={6} $gap={4}><X size={16} color="#333" />删除</Tool>
            <Tool $ml={7}><CopyIcon />复制</Tool>
            <Tool $ml={7}><RenameIcon />重命名</Tool>
            <Sep $ml={7} />
            <Tool $ml={3}>楼层</Tool>
            <FloorSelect>首层</FloorSelect>
            <Caret $ml={3} />
            <Sep $ml={7} />
            <Tool $ml={5}><SortIcon />排序</Tool>
            <Caret $ml={2} />
            <Tool $ml={7}><Funnel size={15} color="#2f86d8" fill="#8cc4f0" />过滤</Tool>
            <Caret $ml={2} />
            <Sep $ml={7} />
            <Tool $ml={4}><FloorCopyIcon />从其他楼层复制构件</Tool>
            <Tool $ml={9}><FloorCopyIcon back />复制构件到其他楼层</Tool>
            <Sep $ml={7} />
            <Tool $ml={7}>查找</Tool>
            <Caret $ml={2} />
            <Sep $ml={8} />
            <Tool $ml={8} $gap={5}><MoveIcon />上移</Tool>
            <Tool $ml={11} $gap={7}><MoveIcon down />下移</Tool>
          </Toolbar>

          <ContentRow>
            <MiddlePane>
              <SearchRow>
                <SearchInput>搜索构件...</SearchInput>
                <SearchButton><Search size={16} strokeWidth={3} /></SearchButton>
              </SearchRow>
              <MemberTree>
                <MemberRoot>
                  <ChevronDown />
                  <RootIcon><ColumnIcon /></RootIcon>
                  <MemberRootLabel>框柱</MemberRootLabel>
                </MemberRoot>
                {members.map((m, i) => (
                  <MemberRow key={m} $last={i === members.length - 1}>
                    <MemberEntry $on={m === "KZ-4"}>
                      <GearDot />
                      {m}
                    </MemberEntry>
                  </MemberRow>
                ))}
              </MemberTree>
            </MiddlePane>

            <RightPane>
              <TabStrip><Tab>属性编辑</Tab></TabStrip>
              <TableTop />
              <PropTable>
                <colgroup>
                  <col width="21" />
                  <col width="191" />
                  <col width="126" />
                  <col width="32" />
                </colgroup>
                <thead>
                  <tr>
                    <HeadCell />
                    <HeadCell>属性名称</HeadCell>
                    <HeadCell $hot>属性值</HeadCell>
                    <HeadCell>附加</HeadCell>
                  </tr>
                </thead>
                <tbody>
                  {propRows.map(r => (
                    <tr key={r.n}>
                      <NumCell $on={r.on}>{r.n}</NumCell>
                      <NameCell $tone={r.tone || "plain"} $on={r.on} $tree={r.tree}>
                        {r.sign ? (
                          <GroupInner>
                            <Expander>{r.sign}</Expander>
                            {r.name}
                          </GroupInner>
                        ) : (
                          r.name
                        )}
                      </NameCell>
                      <ValueCell $on={r.on}>{r.value}</ValueCell>
                      <ExtraCell>{r.check && <Check />}</ExtraCell>
                    </tr>
                  ))}
                </tbody>
              </PropTable>
            </RightPane>
          </ContentRow>
        </MainColumn>
      </Body>

      <FloatWindow $left={956} $top={112} $height={281}>
        <FloatTitle>箍筋图</FloatTitle>
        <StirrupDrawing />
      </FloatWindow>
      <FloatWindow $left={1044} $top={403} $height={290}>
        <FloatTitle>参数图</FloatTitle>
        <ParameterDrawing />
      </FloatWindow>

      <SpeedWidget>
        <SpeedPill>
          <SpeedLine>
            <SpeedArrow /><SpeedValue>0K/s</SpeedValue>
          </SpeedLine>
          <SpeedLine>
            <SpeedArrow down /><SpeedValue>0K/s</SpeedValue>
          </SpeedLine>
        </SpeedPill>
        <SpeedDial>
          <DialRing width="58" height="58" viewBox="0 0 58 58">
            <path d="M29 3 A26 26 0 0 1 55 29" fill="none" stroke="#2fa79a" strokeWidth="2" />
            <path d="M3 29 A26 26 0 0 0 13 49" fill="none" stroke="#e8922f" strokeWidth="2" />
            <path d="M13 49 A26 26 0 0 0 36 54" fill="none" stroke="#d9d24a" strokeWidth="2" />
            <path d="M36 54 A26 26 0 0 0 50 44" fill="none" stroke="#58c46a" strokeWidth="2" />
          </DialRing>
          <DialText>75</DialText>
          <DialPercent>%</DialPercent>
        </SpeedDial>
      </SpeedWidget>

      <ImeBar>
        <ImeLang>英</ImeLang>
        <ImeMoon>·,</ImeMoon>
        <Smile size={16} />
        <Mic size={16} />
        <Keyboard size={17} />
        <User size={15} color="#b5c0cc" fill="#b5c0cc" />
        <Shirt size={15} fill="#1a6fc4" />
        <Wrench size={15} fill="#1a6fc4" />
      </ImeBar>
      <ImeLogo>S</ImeLogo>
    </Page>
  );
}
